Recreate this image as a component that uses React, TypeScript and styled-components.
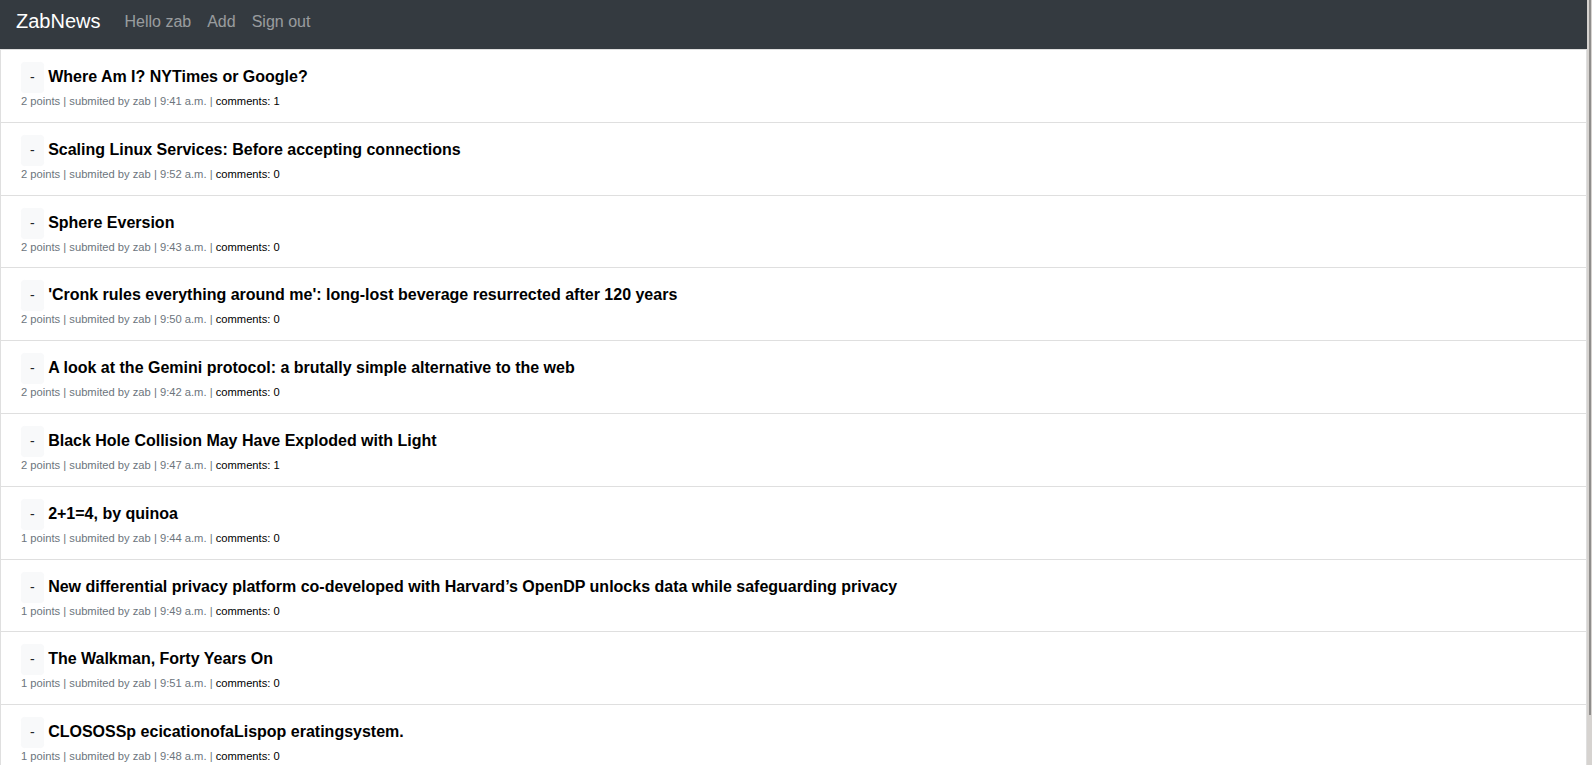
import * as React from "react"
import styled, { createGlobalStyle } from "styled-components"

const GlobalStyle = createGlobalStyle`
    html, body {
        margin: 0;
        padding: 0;
        background: #fff;
        font-family: "Liberation Sans", Arial, sans-serif;
        color: #212529;
    }
    ::-webkit-scrollbar {
        width: 0;
    }
`;

const Page = styled.div`
    margin-right: 5px;
`;

const ScrollTrack = styled.div`
    position: fixed;
    top: 0;
    right: 0;
    bottom: 0;
    width: 5px;
    background: #d6d3d0;
`;

const ScrollThumb = styled.div`
    margin: 0 1px 0 2px;
    height: 715px;
    background: #8f8d8b;
`;

const Navbar = styled.nav`
    display: flex;
    align-items: flex-start;
    height: 49px;
    box-sizing: border-box;
    padding: 6px 16px 0;
    background-color: #343a40;
`;

const Brand = styled.a`
    font-size: 20px;
    line-height: 30px;
    color: #fff;
    margin-right: 16px;
    text-decoration: none;
`;

const NavLink = styled.a`
    font-size: 16px;
    line-height: 24px;
    padding: 4px 8px 0;
    color: rgba(255, 255, 255, 0.5);
    text-decoration: none;
`;

const List = styled.ul`
    list-style: none;
    margin: 0;
    padding: 0;
`;

const Item = styled.li`
    padding: 12px 20px;
    border: 1px solid rgba(0, 0, 0, 0.125);
    border-top-width: 0;
    background: #fff;
    &:first-child {
        border-top-width: 1px;
    }
`;

const Head = styled.div`
    line-height: 1.5;
`;

const VoteButton = styled.button`
    display: inline-block;
    font-family: inherit;
    font-size: 14px;
    line-height: 21px;
    padding: 4px 8px;
    color: #212529;
    background-color: #f8f9fa;
    border: 1px solid #f8f9fa;
    border-radius: 3.2px;
    vertical-align: baseline;
    cursor: pointer;
`;

const Title = styled.a`
    font-size: 16px;
    font-weight: bold;
    color: #000;
    text-decoration: none;
`;

const Meta = styled.div`
    font-size: 11.2px;
    line-height: 16.8px;
    color: #6c757d;
`;

const Comments = styled.a`
    color: #000;
    text-decoration: none;
`;

type Story = {
    title: string
    points: number
    time: string
    comments: number
}

const stories: Story[] = [
    { title: "Where Am I? NYTimes or Google?", points: 2, time: "9:41 a.m.", comments: 1 },
    { title: "Scaling Linux Services: Before accepting connections", points: 2, time: "9:52 a.m.", comments: 0 },
    { title: "Sphere Eversion", points: 2, time: "9:43 a.m.", comments: 0 },
    { title: "'Cronk rules everything around me': long-lost beverage resurrected after 120 years", points: 2, time: "9:50 a.m.", comments: 0 },
    { title: "A look at the Gemini protocol: a brutally simple alternative to the web", points: 2, time: "9:42 a.m.", comments: 0 },
    { title: "Black Hole Collision May Have Exploded with Light", points: 2, time: "9:47 a.m.", comments: 1 },
    { title: "2+1=4, by quinoa", points: 1, time: "9:44 a.m.", comments: 0 },
    { title: "New differential privacy platform co-developed with Harvard\u2019s OpenDP unlocks data while safeguarding privacy", points: 1, time: "9:49 a.m.", comments: 0 },
    { title: "The Walkman, Forty Years On", points: 1, time: "9:51 a.m.", comments: 0 },
    { title: "CLOSOSSp ecicationofaLispop eratingsystem.", points: 1, time: "9:48 a.m.", comments: 0 },
];

const StoryRow = ({ story }: { story: Story }) => (
    <Item>
        <Head>
            <VoteButton>-</VoteButton> <Title href="#">{story.title}</Title>
        </Head>
        <Meta>
            {story.points} points | submited by zab | {story.time} | <Comments href="#">comments: {story.comments}</Comments>
        </Meta>
    </Item>
)

const App = () => {
    return (
        <>
            <GlobalStyle />
            <Page>
                <Navbar>
                    <Brand href="#">ZabNews</Brand>
                    <NavLink href="#">Hello zab</NavLink>
                    <NavLink href="#">Add</NavLink>
                    <NavLink href="#">Sign out</NavLink>
                </Navbar>
                <List>
                    {stories.map((s, i) => <StoryRow key={i} story={s} />)}
                </List>
            </Page>
            <ScrollTrack>
                <ScrollThumb />
            </ScrollTrack>
        </>
    )
}

export default App;
